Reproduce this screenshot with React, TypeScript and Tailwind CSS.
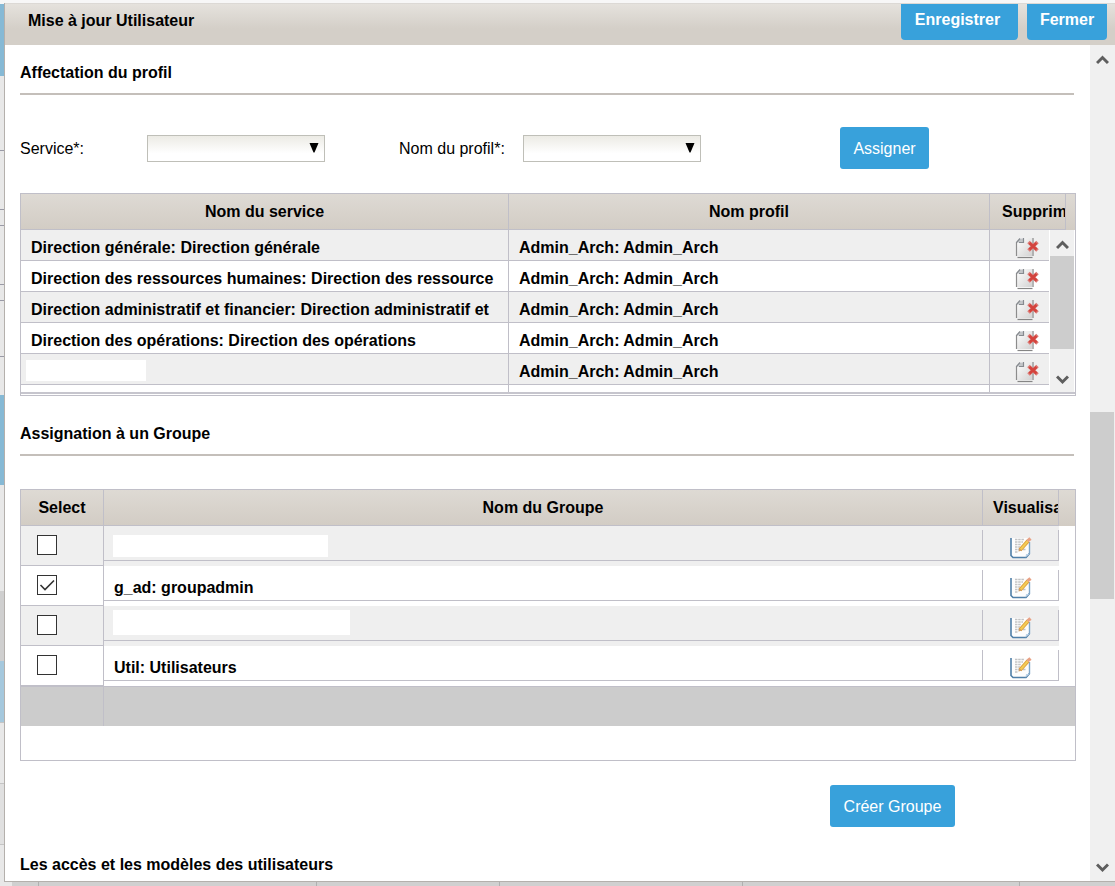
import React from "react";

const profiles = [
  { service: "Direction générale: Direction générale", profil: "Admin_Arch: Admin_Arch" },
  { service: "Direction des ressources humaines: Direction des ressource", profil: "Admin_Arch: Admin_Arch" },
  { service: "Direction administratif et financier: Direction administratif et", profil: "Admin_Arch: Admin_Arch" },
  { service: "Direction des opérations: Direction des opérations", profil: "Admin_Arch: Admin_Arch" },
  { service: "", profil: "Admin_Arch: Admin_Arch" },
];

const groups = [
  { name: "", checked: false, blank: "h-[22px] w-[215px]" },
  { name: "g_ad: groupadmin", checked: true, blank: "" },
  { name: "", checked: false, blank: "mb-2 h-[25px] w-[237px]" },
  { name: "Util: Utilisateurs", checked: false, blank: "" },
];

function DeleteIcon() {
  return (
    <svg width="24" height="22" viewBox="0 0 24 22" className="block">
      <defs>
        <linearGradient id="sheet" x1="0" y1="0" x2="1" y2="1">
          <stop offset="0" stopColor="#ffffff" />
          <stop offset="1" stopColor="#d2d2d2" />
        </linearGradient>
      </defs>
      <path d="M5 1h12v18H2V5z" fill="url(#sheet)" />
      <path d="M1.500 5v14" stroke="#8c8c8c" strokeWidth="1.200" />
      <path d="M2 5.500L5.500 1.500h3v4z" fill="#c3c6c9" />
      <path d="M1.500 5.500L5 1.500M8.500 1v4.500H4" fill="none" stroke="#868a8f" strokeWidth="1.200" />
      <path d="M2.500 20.500h15" stroke="#858585" strokeWidth="1.200" />
      <path d="M18 1v18" stroke="#9c9c9c" strokeWidth="1.500" />
      <path d="M13.500 5l9 8.500M22.500 5l-9 8.500" stroke="#dd7a75" strokeWidth="3.600" />
      <path d="M14.500 6l7 6.500M21.500 6l-7 6.500" stroke="#d3433d" strokeWidth="2.600" />
    </svg>
  );
}

function EditIcon() {
  return (
    <svg width="22" height="22" viewBox="0 0 22 22" className="block">
      <path d="M1 1h18v15l-4 5H3L1 19z" fill="#fdfdfd" />
      <path d="M1 1v17.500L3 20.500h13l3.500-4" fill="none" stroke="#4f7fa8" strokeWidth="1.600" />
      <path d="M19.500 17V5" stroke="#7ea6c8" strokeWidth="1.400" />
      <path d="M15.500 20.500l.5-3.500h3.500z" fill="#bcd3e8" />
      <path
        d="M5 2.500h9M5 5h8M5 7.500h6M5 10h5M5 12.500h4M5 15h3M13 12.500h3"
        stroke="#c4c4c4"
        strokeWidth="1.300"
        strokeDasharray="2.500 .7"
      />
      <path d="M10 13L18 4" stroke="#dc9c3a" strokeWidth="3.800" />
      <path d="M10.500 12.500L18 4" stroke="#f3cc55" strokeWidth="2" />
      <path d="M17.500 4L20.500 1.500" stroke="#e8a184" strokeWidth="3.400" />
      <path d="M8.500 14.500l.5-3 3 2z" fill="#d29a62" />
    </svg>
  );
}

function Chevron({ down = false }: { down?: boolean }) {
  return (
    <svg width="13" height="10" viewBox="0 0 13 10" className="block">
      <path
        d={down ? "M1 1.500l5.500 5.500L12 1.500" : "M1 8l5.500-5.500L12 8"}
        fill="none"
        stroke="#5e5e5e"
        strokeWidth="3"
      />
    </svg>
  );
}

function Dropdown({ id }: { id: string }) {
  return (
    <div className="relative w-[178px]">
      <select
        id={id}
        className="block h-[27px] w-full appearance-none border border-[#bfbfb8] bg-linear-to-b from-[#ecebe5] to-white to-70% px-2"
      >
        <option value=""></option>
      </select>
      <svg width="10" height="10" viewBox="0 0 10 10" className="pointer-events-none absolute top-2 right-1.5">
        <path d="M.5 0h9L5.500 9.500h-1z" fill="#000" />
      </svg>
    </div>
  );
}

function SectionTitle({ children }: { children: React.ReactNode }) {
  return (
    <h2 className="mr-0.5 border-b-2 border-[#c4bfba] pt-4 pb-2 leading-6 font-bold">{children}</h2>
  );
}

const th = "h-9 overflow-hidden border-r border-b border-[#c0bfc8] p-0 font-bold whitespace-nowrap";
const td = "h-[31px] overflow-hidden border-r border-b border-[#c0bfc8] p-0 pt-1.5 pl-2.5 whitespace-nowrap";
const head = "bg-linear-to-b from-[#dedad4] to-[#d2ccc4]";

function ProfileTable() {
  return (
    <div className="relative mt-6 border border-[#c0bfc8] pb-px">
      <table className="w-full table-fixed border-separate border-spacing-0 border-b-2 border-[#c6c5cd] leading-6 font-bold">
        <colgroup>
          <col className="w-[488px]" />
          <col />
          <col className="w-[76px]" />
          <col className="w-[9px]" />
        </colgroup>
        <thead className={head}>
          <tr>
            <th className={th}>Nom du service</th>
            <th className={th}>Nom profil</th>
            <th className={`${th} pl-3 text-left`}>Supprim</th>
            <th className="p-0"></th>
          </tr>
        </thead>
        <tbody>
          {profiles.map((p, i) => (
            <tr key={i} className="odd:bg-[#efefef]">
              <td className={td}>
                {p.service || <div className="-mt-1 -ml-[5px] h-[21px] w-[120px] bg-white" />}
              </td>
              <td className={td}>{p.profil}</td>
              <td colSpan={2} className="border-b border-[#c0bfc8] p-0 pt-1.5 pl-[25px]">
                <button className="block" aria-label="Supprimer">
                  <DeleteIcon />
                </button>
              </td>
            </tr>
          ))}
          <tr>
            <td className="h-[7px] border-r border-[#c0bfc8] p-0"></td>
            <td className="border-r border-[#c0bfc8] p-0"></td>
            <td colSpan={2} className="p-0"></td>
          </tr>
        </tbody>
      </table>
      <div className="absolute top-9 right-0 bottom-[3px] flex w-[26px] flex-col items-center border-r border-l border-white bg-[#f0f0f0]">
        <div className="flex h-[26px] items-center pt-1">
          <Chevron />
        </div>
        <div className="h-[93px] w-full bg-[#cdcdcd]" />
        <div className="mt-auto flex h-[26px] items-center pt-0.5">
          <Chevron down />
        </div>
      </div>
    </div>
  );
}

function GroupTable() {
  return (
    <div className="mt-[33px] border border-[#c0bfc8] pb-[34px]">
      <table className="w-full table-fixed border-separate border-spacing-0 leading-6 font-bold">
        <colgroup>
          <col className="w-[83px]" />
          <col />
          <col className="w-[76px]" />
          <col className="w-4" />
        </colgroup>
        <thead className={head}>
          <tr>
            <th className={th}>Select</th>
            <th className={th}>Nom du Groupe</th>
            <th className={`${th} pl-2.5 text-left`}>Visualisation</th>
            <th className="p-0"></th>
          </tr>
        </thead>
        <tbody>
          {groups.map((g, i) => {
            const bg = i % 2 ? "bg-white" : "bg-[#efefef]";
            return (
              <tr key={i}>
                <td className={`h-10 border-r border-b border-[#c0bfc8] p-0 pb-0.5 pl-4 ${bg}`}>
                  <div className="relative size-5">
                    <input
                      type="checkbox"
                      defaultChecked={g.checked}
                      aria-label={g.name || "Groupe"}
                      className="peer block size-5 appearance-none border border-[#333] bg-white"
                    />
                    <svg
                      width="20"
                      height="20"
                      viewBox="0 0 20 20"
                      className="pointer-events-none absolute inset-0 hidden peer-checked:block"
                    >
                      <path d="M3.500 10l4.500 4.500 9-9" fill="none" stroke="#333" strokeWidth="1.600" />
                    </svg>
                  </div>
                </td>
                <td className={`p-0 align-top ${bg}`}>
                  <div className="mt-1 flex h-[31px] items-center border-r border-b border-[#c0bfc8] pt-1.5 pl-2.5">
                    {g.name || <div className={`-mt-1 -ml-px bg-white ${g.blank}`} />}
                  </div>
                </td>
                <td className={`p-0 align-top ${bg}`}>
                  <div className="mt-1 h-[31px] border-r border-b border-[#c0bfc8] pt-[7px] pl-[27px]">
                    <button className="block" aria-label="Visualiser">
                      <EditIcon />
                    </button>
                  </div>
                </td>
                <td className="p-0"></td>
              </tr>
            );
          })}
          <tr className="bg-[#ccc]">
            <td className="h-10 border-t border-r border-[#c0bfc8] p-0"></td>
            <td colSpan={3} className="border-t border-[#c0bfc8] p-0"></td>
          </tr>
        </tbody>
      </table>
    </div>
  );
}

// slice of the page that stays visible on the left of the dialog
function PageEdge() {
  return (
    <div className="flex w-1 shrink-0 flex-col bg-[#e8e8e8]">
      <div className="h-1 bg-[#f7f7f7]" />
      <div className="h-[72px] bg-[#86b9d5]" />
      <div className="h-[75px] border-b border-[#9a9aa6]" />
      <div className="h-[59px] border-b border-[#9a9aa6]" />
      <div className="h-4 border-b border-[#9a9aa6]" />
      <div className="h-[59px] border-b border-[#9a9aa6]" />
      <div className="h-4 border-b border-[#9a9aa6]" />
      <div className="h-14 border-b border-[#9a9aa6]" />
      <div className="mt-[38px] h-[90px] bg-[#86b9d5]" />
      <div className="mt-[106px] h-[70px] bg-[#cfcfcf]" />
      <div className="h-[62px] border-b border-[#c4c4c4] bg-[#a5c8dd]" />
      <div className="h-[61px] border-b border-[#c4c4c4]" />
      <div className="h-[61px] border-b border-[#c4c4c4] bg-[#e0e0e0]" />
    </div>
  );
}

export default function App() {
  return (
    <div className="flex h-screen overflow-hidden bg-[#e8e8e8] font-['Liberation_Sans',Arial,sans-serif] text-base text-black">
      <PageEdge />
      <div className="flex min-w-0 flex-1 flex-col">
        <div className="h-[3px] shrink-0 bg-[#f7f7f7]" />
        <div className="flex min-h-0 flex-1 flex-col border-b border-l border-[#b4b0ac] bg-white">
          <header className="flex h-[42px] shrink-0 items-start border-t border-[#dcd9d5] bg-linear-to-b from-[#e5e2dd] to-[#d4cfc8] to-60% pr-2 pl-[23px] font-bold">
            <h1 className="mt-[5px] flex-1 leading-6">Mise à jour Utilisateur</h1>
            <button className="h-9 w-[117px] rounded-b-sm bg-[#38a1db] pr-1 pb-1 text-white">Enregistrer</button>
            <button className="ml-[9px] h-9 w-20 rounded-b-sm bg-[#38a1db] pb-1 text-white">Fermer</button>
          </header>

          <div className="flex min-h-0 flex-1">
            <main className="min-w-0 flex-1 overflow-hidden pr-3.5 pl-[15px]">
              <SectionTitle>Affectation du profil</SectionTitle>
              <div className="mt-8 flex items-center">
                <label htmlFor="service" className="w-[127px] pt-0.5">
                  Service*:
                </label>
                <Dropdown id="service" />
                <label htmlFor="profil" className="ml-[74px] w-[124px] pt-0.5">
                  Nom du profil*:
                </label>
                <Dropdown id="profil" />
                <button className="ml-[139px] h-[42px] w-[89px] rounded-[3px] bg-[#38a1db] pt-0.5 text-white">
                  Assigner
                </button>
              </div>
              <ProfileTable />

              <div className="mt-2.5">
                <SectionTitle>Assignation à un Groupe</SectionTitle>
              </div>
              <GroupTable />
              <div className="mt-6 flex justify-end pr-[121px]">
                <button className="h-[42px] w-[125px] rounded-[3px] bg-[#38a1db] pt-0.5 text-white">
                  Créer Groupe
                </button>
              </div>

              <h2 className="mt-2.5 pt-4 leading-6 font-bold">Les accès et les modèles des utilisateurs</h2>
            </main>

            <div className="flex w-[25px] shrink-0 flex-col items-center bg-[#f0f0f0] pr-px">
              <div className="flex h-[29px] items-center">
                <Chevron />
              </div>
              <div className="mt-[338px] h-[187px] w-full bg-[#cdcdcd]" />
              <div className="mt-auto flex h-[26px] items-center">
                <Chevron down />
              </div>
            </div>
          </div>
        </div>

        <div className="flex h-1 shrink-0 bg-[#d0d0d0]">
          <div className="w-2 bg-[#e8e8e8]" />
          <div className="w-[27px] border-r border-[#b0b0b0]" />
          <div className="w-[278px] border-r border-[#b0b0b0]" />
          <div className="w-[183px] border-r border-[#b0b0b0]" />
          <div className="w-[243px] border-r border-[#b0b0b0]" />
          <div className="w-[277px] border-r border-[#b0b0b0]" />
        </div>
      </div>
    </div>
  );
}
